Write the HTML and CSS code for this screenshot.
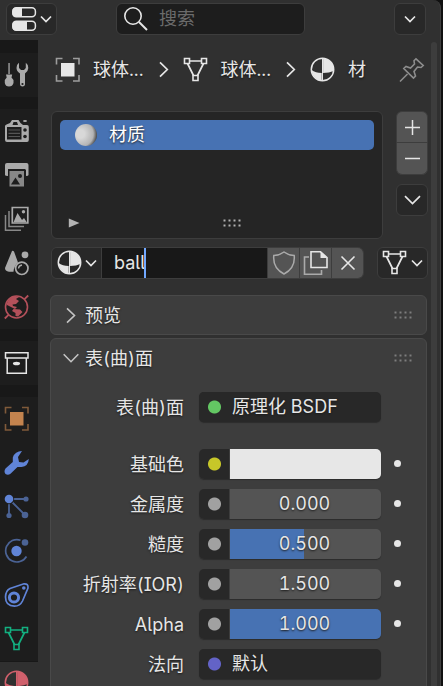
FILE: index.html
```
<!DOCTYPE html>
<html lang="zh-CN">
<head>
  <meta charset="UTF-8">
  <meta name="viewport" content="width=device-width, initial-scale=1.0">
  <title>材质属性</title>
  <link rel="stylesheet" href="styles.css">
</head>
<body>

<!-- shared icons -->
<svg class="defs" width="0" height="0">
  <symbol id="mesh" viewBox="0 0 26 26">
    <path d="M6.500 4H18.500M4.500 6.500L10.500 18.500M20.500 6.500L14.500 18.500" fill="none" stroke="currentColor" stroke-width="1.7"/>
    <path d="M1.500 1.500h5v5h-5zM18.500 1.500h5v5h-5zM10 18.500h5v5h-5z" fill="none" stroke="currentColor" stroke-width="1.6"/>
  </symbol>
  <symbol id="material" viewBox="0 0 26 26">
    <circle cx="12.500" cy="12.500" r="11.2" fill="none" stroke="currentColor" stroke-width="1.5"/>
    <path d="M13.1 1.3A11.2 11.2 0 0 1 23.5 14Q19.5 16 13.1 16.1ZM11.7 23.7A11.2 11.2 0 0 1 1.5 13Q5.5 15.9 11.7 16.1Z" fill="currentColor"/>
    <path d="M12.500 1.500V23.500" stroke="currentColor" stroke-width="1"/>
  </symbol>
  <symbol id="object" viewBox="0 0 26 26">
    <rect x="6" y="6" width="13.5" height="13.5" fill="currentColor"/>
    <path d="M7.500 1.500H1.500V7.500M18 1.500H24V7.500M7.500 24H1.500V18M18 24H24V18" fill="none" stroke="currentColor" stroke-width="1.6" opacity=".6"/>
  </symbol>
  <symbol id="down" viewBox="0 0 12 8">
    <path d="M1 1.5L6 6.5L11 1.5" fill="none" stroke="currentColor" stroke-width="1.7"/>
  </symbol>
  <symbol id="right" viewBox="0 0 10 17">
    <path d="M1 1.3L8.3 8.5L1 15.7" fill="none" stroke="currentColor" stroke-width="1.7"/>
  </symbol>
  <symbol id="grip" viewBox="0 0 18 8">
    <path d="M0.5 1.5h2M5.5 1.5h2M10.5 1.5h2M15.5 1.5h2M0.5 6.5h2M5.5 6.5h2M10.5 6.5h2M15.5 6.5h2" stroke="currentColor" stroke-width="2"/>
  </symbol>
</svg>

<div class="editor">
  <header class="header">
    <button class="box editor-type">
      <svg width="26" height="26" viewBox="0 0 26 26">
        <rect x="1.8" y="1.8" width="22.6" height="9" rx="3.5" fill="none" stroke="#e6e6e6" stroke-width="1.5"/>
        <path d="M5 1.5H11V11H5Q1.5 11 1.5 7.5V5Q1.5 1.5 5 1.5Z" fill="#e6e6e6"/>
        <rect x="1.8" y="15.3" width="22.6" height="9" rx="3.5" fill="none" stroke="#e6e6e6" stroke-width="1.5"/>
        <path d="M5 15H16V24.5H5Q1.5 24.5 1.5 21V18.5Q1.5 15 5 15Z" fill="#e6e6e6"/>
      </svg>
      <svg width="12" height="8"><use href="#down"/></svg>
    </button>
    <div class="box search">
      <svg width="26" height="26" viewBox="0 0 26 26" fill="none" stroke="#e6e6e6">
        <circle cx="10" cy="10" r="8.2" stroke-width="1.6"/>
        <path d="M16 16L24 24" stroke-width="2"/>
      </svg>
      <span>搜索</span>
    </div>
    <button class="box options"><svg width="12" height="8"><use href="#down"/></svg></button>
  </header>

  <div class="body">
    <nav class="tabs">
      <div class="tab-group">
        <a class="tab">
          <svg width="26" height="26" viewBox="0 0 26 26" fill="#aaa">
            <path d="M4.400 1H5.700V12H4.400zM2 12.500H8.200L7.500 15.500L9.500 18V21Q8.500 24.500 5 24.500T.8 21V18L2.700 15.500Z"/>
            <path d="M15 .8Q12.500 2.500 12.500 6Q12.500 9 16 11.500V22.500Q16.200 24.600 18.500 24.600T21 22.500V11.500Q24.300 9 24.300 6Q24.300 2.500 21.800 .8V6L20 8H17L15 6Z"/>
            <circle cx="18.500" cy="22" r="1.1" fill="#1d1d1d"/>
          </svg>
        </a>
      </div>
      <div class="tab-group">
        <a class="tab">
          <svg width="26" height="26" viewBox="0 0 26 26" fill="#aaa">
            <path d="M2.500 6.500L6 5L8 2H14.500L16.500 5L19 7H23Q24.800 7 24.800 9V22Q24.800 24 23 24H3Q1 24 1 22V8Q1 7 2.500 6.500Z"/>
            <ellipse cx="21" cy="3" rx="2" ry="1"/>
            <path d="M8.500 7L9.500 4H13L14 7ZM3 9H17.500V21.500H3Z" fill="#1d1d1d"/>
            <path d="M4.500 12H16M4.500 15.300H16M4.500 18.500H16" stroke="#555" stroke-width="1.2"/>
            <circle cx="21" cy="12" r="1.8" fill="#1d1d1d"/><circle cx="21" cy="18.500" r="1.8" fill="#1d1d1d"/>
          </svg>
        </a>
        <a class="tab">
          <svg width="26" height="26" viewBox="0 0 26 26" fill="#aaa">
            <path d="M3 1H22.500Q24.500 1 24.500 3V13Q24.500 14 22 14V8H4V14Q1 14 1 13V3Q1 1 3 1Z"/>
            <path d="M4 7.500H21.500" stroke="#1d1d1d" stroke-width="1"/>
            <path d="M5.500 9H20V24.500H5.500Z" fill="#888"/>
            <path d="M7 22.500L11.500 15.500L16 22.500Z" fill="#1d1d1d"/><circle cx="16" cy="14" r="2" fill="#1d1d1d"/>
          </svg>
        </a>
        <a class="tab">
          <svg width="26" height="26" viewBox="0 0 26 26" fill="none" stroke="#aaa">
            <path d="M8.300 1.500H23.800V17H8.300Z" stroke-width="1.7"/>
            <path d="M5 5V20.500H20M1.500 9V24.300H17" stroke="#888" stroke-width="1.5"/>
            <path d="M9.500 16.300L13.500 7L18 14L20 12L22.800 16.300Z" fill="#aaa" stroke="none"/>
            <circle cx="19.500" cy="5.800" r="1.7" fill="#aaa" stroke="none"/>
          </svg>
        </a>
        <a class="tab">
          <svg width="26" height="26" viewBox="0 0 26 26" fill="#aaa">
            <path d="M8 1L1 18Q1 21.300 5 21.800H9.500Q10 15.500 14 12.500L10 1.500Q9 .5 8 1Z"/>
            <circle cx="21" cy="4.800" r="3.4"/>
            <circle cx="17.800" cy="18.300" r="6.2" fill="none" stroke="#aaa" stroke-width="1.7"/>
            <path d="M14.500 18.500Q14.700 15.500 18 15" fill="none" stroke="#aaa" stroke-width="1.3"/>
          </svg>
        </a>
        <a class="tab">
          <svg width="26" height="26" viewBox="0 0 26 26" fill="#b3505a">
            <circle cx="12.500" cy="13" r="11" fill="none" stroke="#b3505a" stroke-width="1.6"/>
            <path d="M.8 24.500L4.500 20.800M20.500 5.200L24.200 1.500" stroke="#b3505a" stroke-width="1.8"/>
            <path d="M3 9Q5 3 11 2L15 3L12 5L15 7L12 10L8.500 10.500L9 12L13 13L11 15L7 13L3 11ZM9.500 15L16 15.500L18.500 18L14 22.500L11.500 22L11.500 19L8 17Z"/>
          </svg>
        </a>
      </div>
      <div class="tab-group">
        <a class="tab">
          <svg width="26" height="26" viewBox="0 0 26 26" fill="none" stroke="#e6e6e6" stroke-width="1.500">
            <path d="M1.500 2.700H24V8H1.500ZM3.200 8V23.300H22.300V8"/>
            <ellipse cx="12.500" cy="13.500" rx="3.600" ry="1.800" fill="#e6e6e6" stroke="none"/>
          </svg>
        </a>
      </div>
      <div class="tab-group">
        <a class="tab orange"><svg width="26" height="26"><use href="#object"/></svg></a>
        <a class="tab">
          <svg width="26" height="26" viewBox="0 0 26 26" fill="#6084d7">
            <path d="M18 1Q11 1 8.800 7.500V12L1.500 18.500Q-.5 21.500 1.500 24Q4 25.500 6.500 23.700L13.500 17H17.500Q24.500 16 24.800 9L19.500 12.500L15 12L14 7Z"/>
          </svg>
        </a>
        <a class="tab">
          <svg width="26" height="26" viewBox="0 0 26 26" fill="#4b6395">
            <path d="M5 5H21M5 5V21M5 5L21 21" stroke="#4b6395" stroke-width="1.8"/>
            <circle cx="22" cy="5" r="2.600"/><circle cx="5" cy="21.500" r="2.600"/><circle cx="21" cy="21" r="3.300"/>
            <circle cx="5" cy="5" r="5.2" fill="#1d1d1d"/>
            <circle cx="5" cy="5" r="4.3" fill="#6084d7"/>
          </svg>
        </a>
        <a class="tab">
          <svg width="26" height="26" viewBox="0 0 26 26" fill="#4b6395">
            <path d="M16.500 2.200A11.2 11.2 0 1 0 22.500 18.500" fill="none" stroke="#4b6395" stroke-width="1.7"/>
            <circle cx="21" cy="4.500" r="3.300"/>
            <circle cx="12.500" cy="13" r="5.2" fill="#6084d7"/>
          </svg>
        </a>
        <a class="tab">
          <svg width="26" height="26" viewBox="0 0 26 26" fill="none" stroke="#6084d7">
            <path d="M6 6.500L20 1.800Q24.500 1.500 24 6L18.500 19Q16 24.200 10.500 24.200Q1.500 24 1.500 15Q1.500 9 6 6.500Z" stroke-width="1.7"/>
            <circle cx="10" cy="15.500" r="4.600" stroke-width="3"/>
            <circle cx="19.800" cy="6" r="1.800" fill="#6084d7" stroke="none"/>
          </svg>
        </a>
        <a class="tab green"><svg width="26" height="26"><use href="#mesh"/></svg></a>
      </div>
      <a class="tab active"><svg width="26" height="26"><use href="#material"/></svg></a>
    </nav>

    <main class="content">
      <div class="path">
        <svg class="path-icon" width="26" height="26"><use href="#object"/></svg>
        <span class="path-name">球体...</span>
        <svg class="path-sep" width="10" height="17"><use href="#right"/></svg>
        <svg class="path-icon" width="26" height="26"><use href="#mesh"/></svg>
        <span class="path-name">球体...</span>
        <svg class="path-sep" width="10" height="17"><use href="#right"/></svg>
        <svg class="path-icon" width="26" height="26"><use href="#material"/></svg>
        <span class="path-name">材</span>
        <svg class="pin" width="26" height="26" viewBox="0 0 26 26" fill="none" stroke="#8c8c8c" stroke-width="1.6">
          <path d="M1 24.500L8.500 17M17 1.800L24.200 8.500L22 10.500L18.500 10L15 14.500L16.500 19L14.500 21L4.800 11.500L7 9.500L11.500 11L15.500 7L15 3.800Z"/>
        </svg>
      </div>

      <div class="slots">
        <div class="slot-list">
          <div class="slot"><i class="ball"></i><span>材质</span></div>
          <div class="slot-foot">
            <svg width="12" height="10"><path d="M.8 .5L11.500 5L.8 9.500Z" fill="#b4b4b4"/></svg>
            <svg width="18" height="8"><use href="#grip"/></svg>
          </div>
        </div>
        <div class="slot-buttons">
          <button class="tool add"><svg width="17" height="17"><path d="M1 8.500H16M8.500 1V16" stroke="#e6e6e6" stroke-width="1.5"/></svg></button>
          <button class="tool remove"><svg width="17" height="17"><path d="M1 8.500H16" stroke="#e6e6e6" stroke-width="1.5"/></svg></button>
          <button class="box more"><svg width="17" height="10"><path d="M1 1.200L8.500 8.500L16 1.200" fill="none" stroke="#e6e6e6" stroke-width="1.7"/></svg></button>
        </div>
      </div>

      <div class="data-row">
        <div class="data-id">
          <button class="browse"><svg width="26" height="26"><use href="#material"/></svg><svg width="12" height="8"><use href="#down"/></svg></button>
          <div class="name-input"><span>ball</span><i class="cursor"></i></div>
          <button class="id-btn"><svg width="24" height="26" viewBox="0 0 24 26"><path d="M12 2Q7 5.500 1.800 5.500Q.5 18 12 24Q23.500 18 22.200 5.500Q17 5.500 12 2Z" fill="none" stroke="#aaa" stroke-width="1.500"/></svg></button>
          <button class="id-btn"><svg width="26" height="26" viewBox="0 0 26 26" fill="none" stroke="#e6e6e6" stroke-width="1.600"><path d="M6 7H1.500V24.200H18.500V20" stroke="#aaa"/><path d="M8 1.800H17.500L24 7.500V17.500H8Z"/><path d="M17.500 1.500V8H24.300Z" fill="#e6e6e6" stroke="none"/></svg></button>
          <button class="id-btn"><svg width="16" height="16"><path d="M1.500 1.500L14.500 14.500M14.500 1.500L1.500 14.500" stroke="#e6e6e6" stroke-width="1.6"/></svg></button>
        </div>
        <button class="box link"><svg width="26" height="26"><use href="#mesh"/></svg><svg width="12" height="8"><use href="#down"/></svg></button>
      </div>

      <section class="panel">
        <h2 class="panel-head">
          <svg class="fold" width="16" height="17"><path d="M4 1.300L11.500 8.500L4 15.700" fill="none" stroke="currentColor" stroke-width="1.6"/></svg>
          <span>预览</span>
          <svg class="grip" width="18" height="8"><use href="#grip"/></svg>
        </h2>
      </section>

      <section class="panel open">
        <h2 class="panel-head">
          <svg class="fold" width="16" height="10"><path d="M.7 1.200L8 8.700L15.300 1.200" fill="none" stroke="currentColor" stroke-width="1.6"/></svg>
          <span>表(曲)面</span>
          <svg class="grip" width="18" height="8"><use href="#grip"/></svg>
        </h2>
        <div class="row surface">
          <label>表(曲)面</label>
          <div class="field menu"><i class="socket shader"></i><span>原理化 BSDF</span></div>
        </div>
        <div class="row">
          <label>基础色</label>
          <div class="field"><i class="socket color"></i><div class="value swatch"></div></div>
          <i class="key"></i>
        </div>
        <div class="row">
          <label>金属度</label>
          <div class="field"><i class="socket"></i><div class="value">0.000</div></div>
          <i class="key"></i>
        </div>
        <div class="row">
          <label>糙度</label>
          <div class="field"><i class="socket"></i><div class="value half">0.500</div></div>
          <i class="key"></i>
        </div>
        <div class="row">
          <label>折射率(IOR)</label>
          <div class="field"><i class="socket"></i><div class="value">1.500</div></div>
          <i class="key"></i>
        </div>
        <div class="row">
          <label>Alpha</label>
          <div class="field"><i class="socket"></i><div class="value full">1.000</div></div>
          <i class="key"></i>
        </div>
        <div class="row">
          <label>法向</label>
          <div class="field menu"><i class="socket vector"></i><span>默认</span></div>
        </div>
      </section>
    </main>
    <div class="scrollbar"></div>
  </div>
</div>

</body>
</html>
```
FILE: styles.css
```
* {
  box-sizing: border-box;
}

body {
  margin: 0;
  background-color: #101010;
  color: #e6e6e6;
  font: 18px/30px Inter, "Noto Sans CJK SC", sans-serif;
  font-feature-settings: "cv05", "cv08", "tnum";
  overflow: hidden;
}

svg {
  display: block;
  flex: none;
}

button {
  margin: 0;
  padding: 0;
  border: none;
  color: inherit;
  display: flex;
  align-items: center;
  justify-content: center;
}

.defs {
  position: absolute;
}

.editor {
  width: 441px;
  height: 686px;
  background-color: #303030;
  border-right: 1px solid #3f3f3f;
  border-top-right-radius: 8px;
  overflow: hidden;
}

.box {
  background-color: #282828;
  border: 1px solid #3d3d3d;
  border-radius: 6px;
}

/* header */
.header {
  display: flex;
  height: 40px;
  padding: 3px 14px 0 6px;
}

.editor-type {
  width: 51px;
  height: 32px;
  gap: 3px;
}

.search {
  display: flex;
  align-items: center;
  width: 189px;
  height: 32px;
  margin-left: 59px;
  padding-left: 6px;
  gap: 10px;
  background-color: #1d1d1d;
  color: #6b6b6b;
}

.options {
  width: 32px;
  height: 32px;
  margin-left: auto;
}

.body {
  display: flex;
  height: 646px;
}

/* tabs on the left */
.tabs {
  width: 38px;
  flex: none;
  padding-top: 13px;
  background: linear-gradient(#181818 622px, #303030 622px);
}

.tab-group {
  background-color: #1d1d1d;
  margin-bottom: 12px;
}

.tab-group:nth-of-type(4) {
  margin-bottom: 0;
}

.tab {
  display: flex;
  align-items: center;
  height: 44px;
  padding-left: 4px;
}

.tab.active {
  color: #d0606c;
}

.orange {
  color: #c3834e;
}

.green {
  color: #13b080;
}

/* properties */
.content {
  width: 393px;
  flex: none;
  padding: 0 4px 0 12px;
  overflow: hidden;
}

.path {
  display: flex;
  align-items: center;
  height: 58px;
  padding: 1px 0 0 5px;
  margin-bottom: 13px;
  text-shadow: 0 1px 2px #111;
}

.path-name {
  margin-left: 12px;
}

.path-sep {
  margin: 0 14px 0 15px;
}

.pin {
  margin-left: auto;
  margin-right: 2px;
}

.slots {
  display: flex;
  justify-content: space-between;
  padding-left: 1px;
}

.slot-list {
  width: 332px;
  height: 128px;
  padding: 8px;
  background-color: #252525;
  border: 1px solid #3d3d3d;
  border-radius: 6px;
}

.slot {
  display: flex;
  align-items: center;
  height: 30px;
  padding-left: 15px;
  gap: 12px;
  border-radius: 5px;
  background-color: #4772b3;
  color: #fff;
  text-shadow: 0 1px 2px #222;
}

.ball {
  width: 22px;
  height: 22px;
  border-radius: 50%;
  background: radial-gradient(circle at 25% 45%, #d8d8d8 20%, #b4b4b4 62%, #222 88%);
}

.slot-foot {
  display: flex;
  align-items: center;
  height: 10px;
  margin-top: 68px;
  padding-left: 8px;
  gap: 143px;
  color: #b0b0b0;
}

.slot-buttons {
  width: 31px;
}

.tool {
  width: 32px;
  height: 32px;
  background-color: #545454;
  border: 1px solid #3d3d3d;
}

.add {
  border-radius: 6px 6px 0 0;
}

.remove {
  border-radius: 0 0 6px 6px;
  border-top: none;
}

.more {
  width: 32px;
  height: 32px;
  margin-top: 9px;
}

.data-row {
  display: flex;
  justify-content: space-between;
  margin: 8px -1px 16px 1px;
}

.data-id {
  display: flex;
  width: 313px;
  height: 32px;
  border: 1px solid #3d3d3d;
  border-radius: 6px;
  overflow: hidden;
}

.browse {
  width: 50px;
  padding-left: 1px;
  gap: 2px;
  background-color: #282828;
  border-right: 1px solid #3d3d3d;
}

.name-input {
  display: flex;
  flex: 1;
  padding-left: 12px;
  background-color: #181818;
}

.cursor {
  width: 2px;
  margin-left: -1px;
  background-color: #71a8ff;
}

.id-btn {
  width: 32px;
  background-color: #545454;
  border-left: 1px solid #3d3d3d;
}

.link {
  width: 51px;
  height: 32px;
  gap: 3px;
}

/* panels */
.panel {
  height: 40px;
  margin-bottom: 3px;
  background-color: #3d3d3d;
  border: 1px solid #494949;
  border-radius: 6px;
  text-shadow: 0 1px 2px #1a1a1a;
}

.panel.open {
  height: 400px;
}

.panel-head {
  display: flex;
  align-items: center;
  height: 38px;
  margin: 0;
  padding: 0 14px 0 12px;
  gap: 6px;
  font-size: 18px;
  font-weight: 400;
}

.panel-head span {
  padding-top: 2px;
}

.fold {
  color: #c4c4c4;
}

.grip {
  margin-left: auto;
  color: #7d7d7d;
}

.row {
  display: flex;
  align-items: center;
  height: 30px;
  margin-bottom: 10px;
}

.surface {
  margin: 15px 0 27px;
}

.row label {
  width: 133px;
  margin-right: 15px;
  padding-top: 1px;
  text-align: right;
  white-space: nowrap;
}

.field {
  display: flex;
  width: 182px;
  height: 30px;
  gap: 1px;
  border-radius: 5px;
  box-shadow: 0 1px 1px #2c2c2c;
  overflow: hidden;
}

.menu {
  background-color: #282828;
}

.socket {
  width: 30px;
  background: radial-gradient(circle at 15.5px 15px, #a1a1a1 6px, #282828 7px);
}

.socket.shader {
  background: radial-gradient(circle at 15.5px 15px, #63c763 6px, #282828 7px);
}

.socket.color {
  background: radial-gradient(circle at 15.5px 15px, #c7c729 6px, #282828 7px);
}

.socket.vector {
  background: radial-gradient(circle at 15.5px 15px, #6363c7 6px, #282828 7px);
}

.menu span {
  margin-left: 2px;
}

.value {
  flex: 1;
  padding-right: 2px;
  background-color: #545454;
  text-align: center;
}

.value.swatch {
  background-color: #e7e7e7;
}

.value.half {
  background: linear-gradient(90deg, #4772b3 74px, #545454 74px);
}

.value.full {
  background-color: #4772b3;
}

.key {
  width: 7px;
  height: 7px;
  margin: 0 0 1px 13px;
  border-radius: 50%;
  background-color: #e6e6e6;
}

.scrollbar {
  width: 6px;
  margin-top: 2px;
  border-radius: 3px 3px 0 0;
  background-color: #3d3d3d;
}
```
